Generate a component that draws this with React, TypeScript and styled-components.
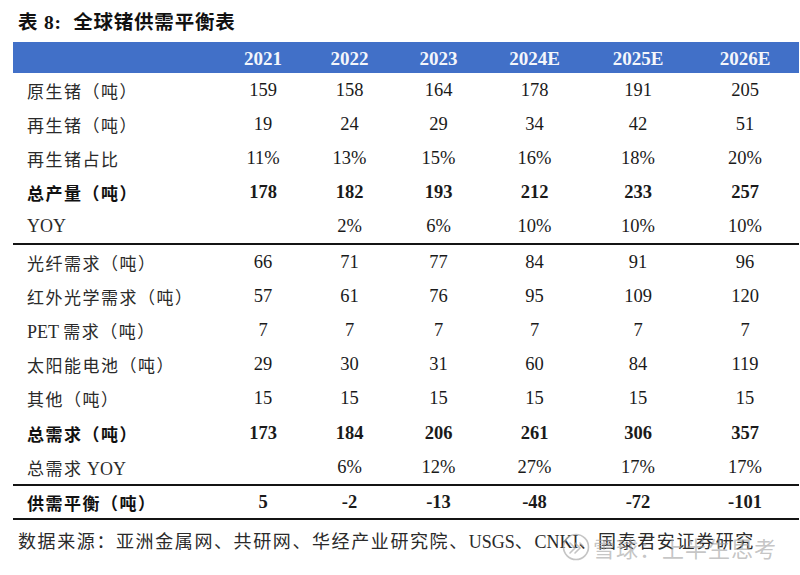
import React from 'react';
import styled, { createGlobalStyle } from 'styled-components';

const GlobalStyle = createGlobalStyle`
  html, body {
    margin: 0;
    padding: 0;
    background: #ffffff;
  }
  body {
    width: 800px;
    height: 575px;
    overflow: hidden;
    font-family: "Liberation Serif", "Noto Sans CJK SC", serif;
    color: #1e1e1e;
  }
`;

const years = ['2021', '2022', '2023', '2024E', '2025E', '2026E'];

interface RowData {
  label: React.ReactNode;
  key: string;
  values: string[];
  bold?: boolean;
}

const Latin = styled.span`
  font-family: "Liberation Serif", serif;
  letter-spacing: 0;
  font-size: 18px;
`;

const supplyRows: RowData[] = [
  { key: 'a', label: '原生锗（吨）', values: ['159', '158', '164', '178', '191', '205'] },
  { key: 'b', label: '再生锗（吨）', values: ['19', '24', '29', '34', '42', '51'] },
  { key: 'c', label: '再生锗占比', values: ['11%', '13%', '15%', '16%', '18%', '20%'] },
  { key: 'd', label: '总产量（吨）', values: ['178', '182', '193', '212', '233', '257'], bold: true },
  { key: 'e', label: <Latin>YOY</Latin>, values: ['', '2%', '6%', '10%', '10%', '10%'] },
];

const demandRows: RowData[] = [
  { key: 'f', label: '光纤需求（吨）', values: ['66', '71', '77', '84', '91', '96'] },
  { key: 'g', label: '红外光学需求（吨）', values: ['57', '61', '76', '95', '109', '120'] },
  { key: 'h', label: <><Latin>PET </Latin>需求（吨）</>, values: ['7', '7', '7', '7', '7', '7'] },
  { key: 'i', label: '太阳能电池（吨）', values: ['29', '30', '31', '60', '84', '119'] },
  { key: 'j', label: '其他（吨）', values: ['15', '15', '15', '15', '15', '15'] },
  { key: 'k', label: '总需求（吨）', values: ['173', '184', '206', '261', '306', '357'], bold: true },
  { key: 'l', label: <>总需求<Latin> YOY</Latin></>, values: ['', '6%', '12%', '27%', '17%', '17%'] },
];

const balanceRow: RowData = {
  key: 'm',
  label: '供需平衡（吨）',
  values: ['5', '-2', '-13', '-48', '-72', '-101'],
  bold: true,
};

const Page = styled.div`
  position: relative;
  width: 800px;
  height: 575px;
  display: flex;
  flex-direction: column;
`;

const Title = styled.h1`
  margin: 0;
  padding: 11px 0 0 18px;
  height: 33px;
  box-sizing: border-box;
  font-family: "Liberation Serif", "Noto Sans CJK SC", serif;
  font-size: 19.5px;
  font-weight: 700;
  line-height: 24px;
  letter-spacing: 0.8px;
  color: #111;
`;

const Table = styled.div`
  margin: 9px 1px 0 13px;
  display: flex;
  flex-direction: column;
`;

const cols = '207px 86px 87px 91px 101px 106px 108px';

const HeaderRow = styled.div`
  display: grid;
  grid-template-columns: ${cols};
  height: 31px;
  align-items: center;
  background: #4170c8;
  color: #f4f6fb;
  font-family: "Liberation Serif", serif;
  font-weight: 700;
  font-size: 19px;
`;

const HeadCell = styled.div`
  text-align: center;
  padding-top: 2px;
`;

const Group = styled.div<{ $rule?: boolean }>`
  display: flex;
  flex-direction: column;
  border-bottom: ${p => (p.$rule ? '2px solid #141414' : 'none')};
`;

const Row = styled.div<{ $h: number; $bold?: boolean }>`
  display: grid;
  grid-template-columns: ${cols};
  height: ${p => p.$h}px;
  align-items: center;
  font-weight: ${p => (p.$bold ? 700 : 400)};
`;

const Label = styled.div<{ $bold?: boolean }>`
  padding-left: 14px;
  font-family: "Liberation Serif", "Noto Sans CJK SC", serif;
  font-size: 17px;
  letter-spacing: 1.5px;
  color: ${p => (p.$bold ? '#111' : '#2a2a2a')};
  font-weight: ${p => (p.$bold ? 700 : 400)};
  white-space: nowrap;
`;

const Value = styled.div`
  text-align: center;
  font-family: "Liberation Serif", serif;
  font-size: 18.5px;
  color: #1a1a1a;
`;

const Source = styled.div`
  padding: 7px 0 0 18px;
  font-family: "Liberation Serif", "Noto Sans CJK SC", serif;
  font-size: 18px;
  letter-spacing: 1.6px;
  color: #2a2a2a;
  white-space: nowrap;
`;

const Watermark = styled.div`
  position: absolute;
  left: 562px;
  top: 531px;
  display: flex;
  align-items: center;
  gap: 3px;
  color: rgba(165, 165, 165, 0.65);
  font-family: "Noto Sans CJK SC", sans-serif;
  font-size: 22px;
  letter-spacing: 1px;
  pointer-events: none;
`;

const TableRow: React.FC<{ row: RowData; h: number }> = ({ row, h }) => (
  <Row $h={h} $bold={row.bold}>
    <Label $bold={row.bold}>{row.label}</Label>
    {row.values.map((v, i) => (
      <Value key={i}>{v}</Value>
    ))}
  </Row>
);

const SnowLogo = () => (
  <svg width="28" height="28" viewBox="0 0 28 28" fill="none">
    <circle cx="14" cy="14" r="12.5" stroke="rgba(165,165,165,0.65)" strokeWidth="1.6" />
    <path
      d="M8 10 L13 15 L8 20 M13 10 L18 15 L13 20 M18 10 L21 13"
      stroke="rgba(165,165,165,0.65)"
      strokeWidth="1.6"
      strokeLinecap="round"
    />
  </svg>
);

export default function App() {
  return (
    <Page>
      <GlobalStyle />
      <Title>表 8:&nbsp; 全球锗供需平衡表</Title>
      <Table>
        <HeaderRow>
          <div />
          {years.map(y => (
            <HeadCell key={y}>{y}</HeadCell>
          ))}
        </HeaderRow>
        <Group $rule>
          {supplyRows.map(r => (
            <TableRow key={r.key} row={r} h={34} />
          ))}
        </Group>
        <Group $rule>
          {demandRows.map(r => (
            <TableRow key={r.key} row={r} h={34.2} />
          ))}
        </Group>
        <Group $rule>
          <TableRow row={balanceRow} h={32} />
        </Group>
      </Table>
      <Source>
        数据来源：亚洲金属网、共研网、华经产业研究院、<Latin>USGS</Latin>、<Latin>CNKI</Latin>、国泰君安证券研究
      </Source>
      <Watermark>
        <SnowLogo />
        <span>雪球：上半生思考</span>
      </Watermark>
    </Page>
  );
}
